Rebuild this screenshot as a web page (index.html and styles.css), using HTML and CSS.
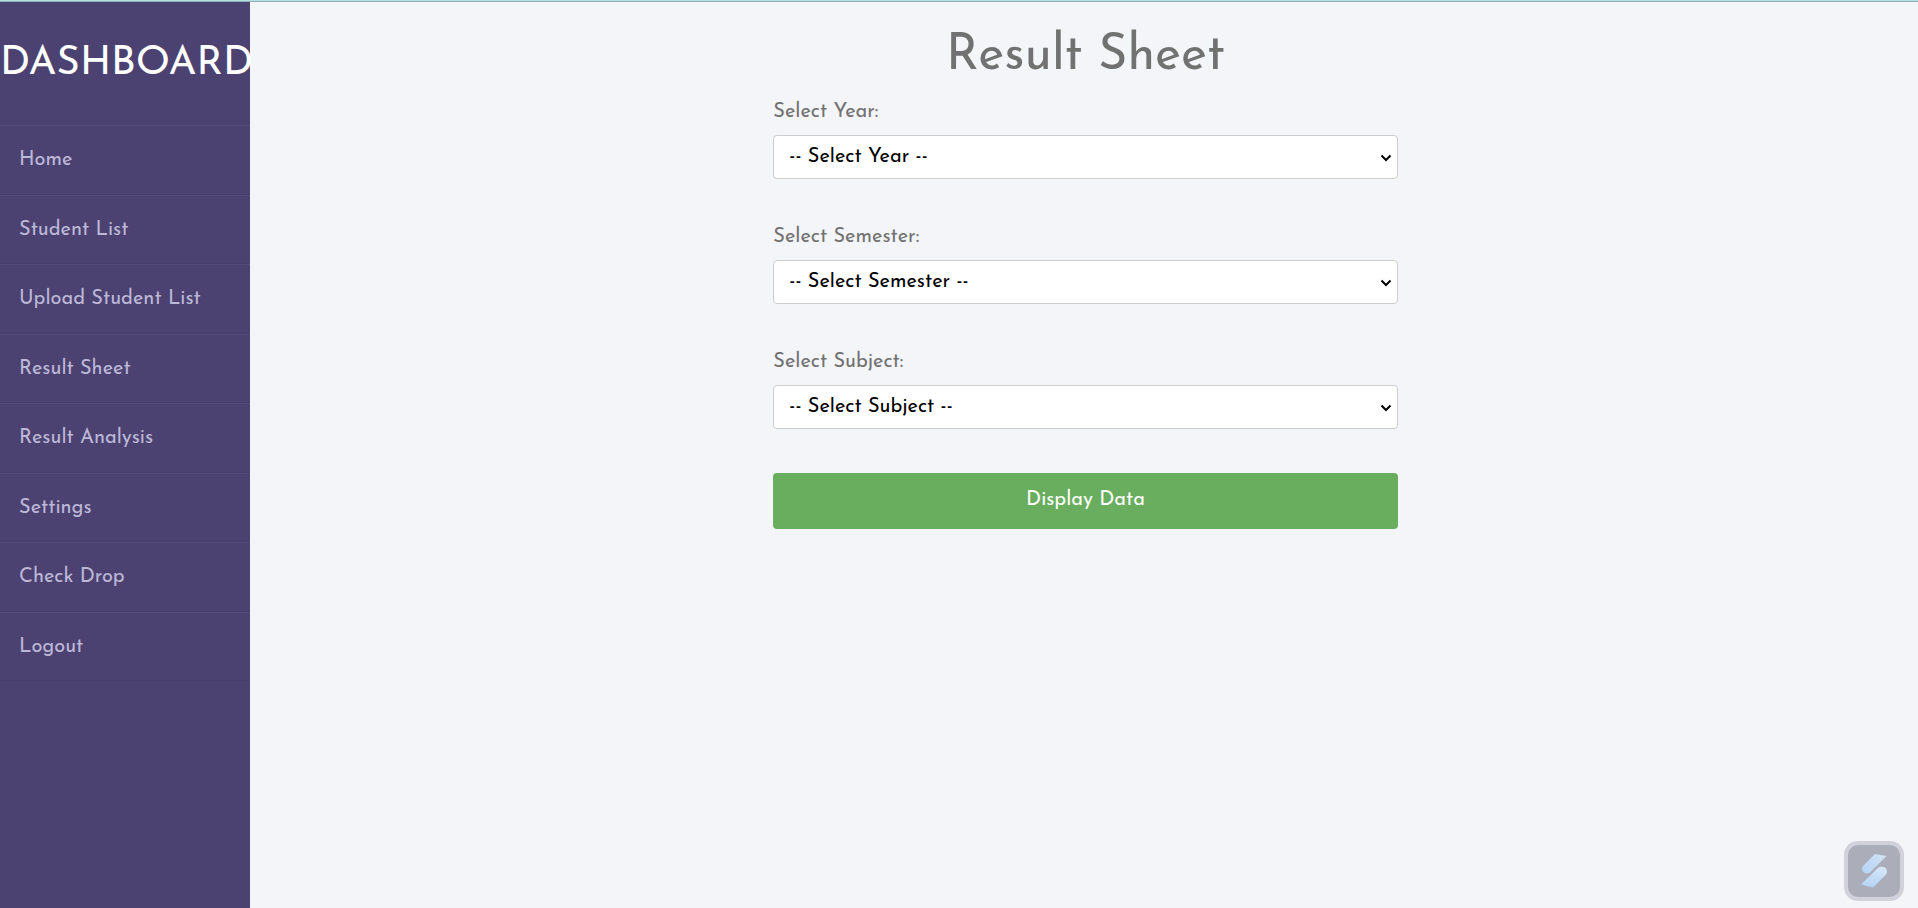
FILE: index.html
```
<!DOCTYPE html>
<html lang="en">
<head>
<meta charset="utf-8">
<title>Result Sheet</title>
<link rel="stylesheet" href="styles.css">
</head>
<body>
<div class="layout">
  <aside class="sidebar">
    <h2 class="brand">DASHBOARD</h2>
    <nav>
      <ul class="menu">
        <li><a href="#">Home</a></li>
        <li><a href="#">Student List</a></li>
        <li><a href="#">Upload Student List</a></li>
        <li><a href="#">Result Sheet</a></li>
        <li><a href="#">Result Analysis</a></li>
        <li><a href="#">Settings</a></li>
        <li><a href="#">Check Drop</a></li>
        <li><a href="#">Logout</a></li>
      </ul>
    </nav>
  </aside>
  <main class="content">
    <h1 class="title">Result Sheet</h1>
    <form class="form">
      <div class="field">
        <label for="year">Select Year:</label>
        <div class="select-box">
          <select id="year"><option>-- Select Year --</option></select>
          <svg class="chevron" viewBox="0 0 12 8" aria-hidden="true"><path d="M1.5 1.5 6 6l4.500-4.500"/></svg>
        </div>
      </div>
      <div class="field">
        <label for="semester">Select Semester:</label>
        <div class="select-box">
          <select id="semester"><option>-- Select Semester --</option></select>
          <svg class="chevron" viewBox="0 0 12 8" aria-hidden="true"><path d="M1.5 1.5 6 6l4.500-4.500"/></svg>
        </div>
      </div>
      <div class="field">
        <label for="subject">Select Subject:</label>
        <div class="select-box">
          <select id="subject"><option>-- Select Subject --</option></select>
          <svg class="chevron" viewBox="0 0 12 8" aria-hidden="true"><path d="M1.5 1.5 6 6l4.500-4.500"/></svg>
        </div>
      </div>
      <button class="submit" type="button">Display Data</button>
    </form>
  </main>
</div>
<button class="widget" type="button" aria-label="Open assistant">
  <svg viewBox="0 0 52 52" aria-hidden="true">
    <defs>
      <linearGradient id="upper" x1="1" y1="0" x2="0" y2="1"><stop offset="0" stop-color="#d3e3f3"/><stop offset="1" stop-color="#b3d3f6"/></linearGradient>
      <linearGradient id="lower" x1="0.700" y1="0" x2="0.400" y2="1"><stop offset="0" stop-color="#d6e6f7"/><stop offset="1" stop-color="#b4d4f6"/></linearGradient>
    </defs>
    <path fill="url(#upper)" d="M27 9 38.500 11 22 27.500C20 29.500 16 28.500 14.600 26 13.500 24 14 22 15.500 20.500Z"/>
    <path fill="url(#lower)" d="M13 39.500 30 23C32 21 36.500 21.500 38.300 24 39.500 26 39 28.500 37.500 30L25 42.500Z"/>
  </svg>
</button>
</body>
</html>
```
FILE: styles.css
```
* {
  box-sizing: border-box;
}

body {
  margin: 0;
  background: #f3f5f9;
  color: #717171;
  font-family: "Josefin Sans", Lato, sans-serif;
  font-size: 20px;
}

.layout {
  display: flex;
  min-height: 100vh;
  border-top: 1px solid #b5e0e3;
  box-shadow: inset 0 1px #8fb3b8;
}

.sidebar {
  flex: 0 0 250px;
  min-width: 0;
  margin-top: 1px;
  background: #4b4272;
}

.brand {
  margin: 0;
  padding: 38px 0 37px;
  color: #fff;
  font-size: 40px;
  font-weight: 400;
  line-height: 48px;
}

.menu {
  margin: 0;
  padding: 0;
  list-style: none;
}

.menu li {
  padding: 21px 19px 19px;
  border-top: 1px solid rgba(255, 255, 255, 0.05);
  border-bottom: 1px solid rgba(0, 0, 0, 0.05);
  line-height: 1.375;
}

.menu a {
  color: #bdb8d7;
  text-decoration: none;
}

.content {
  flex: 1;
  padding: 24px 0 24px 3px;
}

.title {
  margin: 0;
  font-size: 50px;
  font-weight: 400;
  line-height: 64px;
  text-align: center;
}

.form {
  width: 37.5%;
  margin: 0 auto;
  padding-top: 9px;
}

.field {
  margin-bottom: 44px;
}

.field label {
  display: block;
  margin-bottom: 8px;
  line-height: 29px;
}

.select-box {
  position: relative;
}

.select-box select {
  display: block;
  width: 100%;
  height: 44px;
  padding: 0 32px 0 15px;
  border: 1px solid #ccc;
  border-radius: 4px;
  appearance: none;
  background: #fff;
  color: #000;
  font: inherit;
}

.chevron {
  position: absolute;
  top: 19px;
  right: 6px;
  width: 12px;
  height: 8px;
  fill: none;
  stroke: #000;
  stroke-width: 2;
  pointer-events: none;
}

.submit {
  display: block;
  width: 100%;
  height: 56px;
  padding: 0 20px 2px;
  border: 0;
  border-radius: 4px;
  background: #69ad5e;
  color: #fff;
  font: inherit;
}

.widget {
  position: fixed;
  right: 14px;
  bottom: 7px;
  width: 60px;
  height: 60px;
  padding: 0;
  border: 4px solid #d0d1da;
  border-radius: 14px;
  background: #abaeb9;
}

.widget svg {
  display: block;
  width: 100%;
}
```
